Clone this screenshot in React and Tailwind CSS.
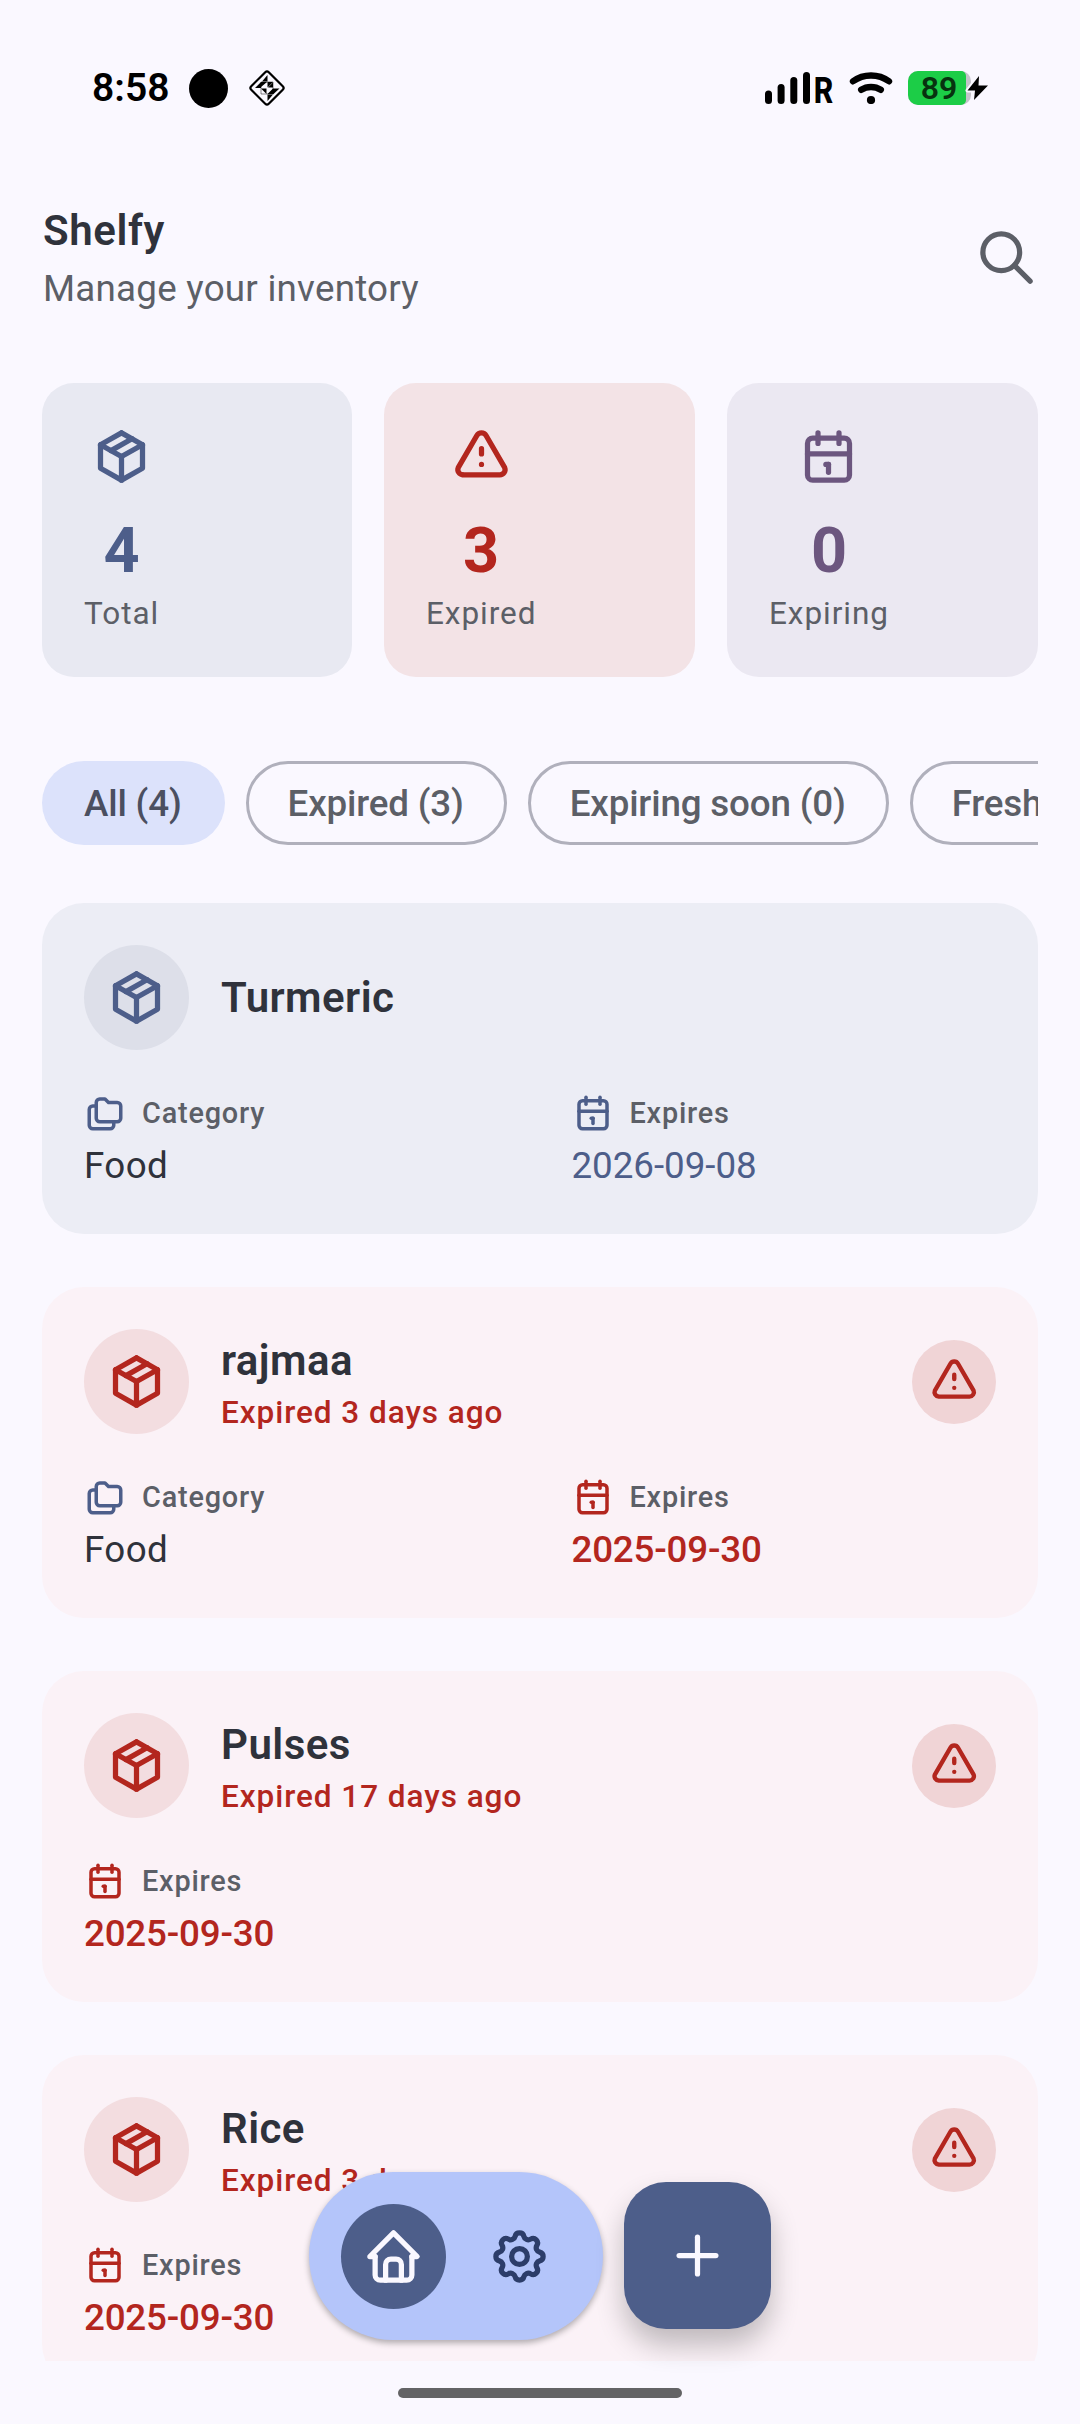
const PATHS = {
  package: ["M12 3l8 4.5v9l-8 4.5l-8 -4.5v-9l8 -4.5", "M12 12l8 -4.5", "M12 12v9", "M12 12l-8 -4.5", "M16 5.25l-8 4.5"],
  alert: ["M12 9v2m0 4v.01", "M5 19h14a2 2 0 0 0 1.84 -2.75l-7.1 -12.25a2 2 0 0 0 -3.5 0l-7.1 12.25a2 2 0 0 0 1.75 2.75"],
  calendar: ["M4 7a2 2 0 0 1 2 -2h12a2 2 0 0 1 2 2v12a2 2 0 0 1 -2 2h-12a2 2 0 0 1 -2 -2z", "M16 3v4", "M8 3v4", "M4 11h16", "M11 15h1", "M12 15v3"],
  folders: ["M9 4h3l2 2h5a2 2 0 0 1 2 2v7a2 2 0 0 1 -2 2h-10a2 2 0 0 1 -2 -2v-9a2 2 0 0 1 2 -2", "M17 17v2a2 2 0 0 1 -2 2h-10a2 2 0 0 1 -2 -2v-9a2 2 0 0 1 2 -2h2"],
  home: ["M5 12h-2l9 -9l9 9h-2", "M5 12v7a2 2 0 0 0 2 2h10a2 2 0 0 0 2 -2v-7", "M9 21v-6a2 2 0 0 1 2 -2h2a2 2 0 0 1 2 2v6"],
  settings: ["M10.325 4.317c.426 -1.756 2.924 -1.756 3.35 0a1.724 1.724 0 0 0 2.573 1.066c1.543 -.94 3.31 .826 2.37 2.37a1.724 1.724 0 0 0 1.065 2.572c1.756 .426 1.756 2.924 0 3.35a1.724 1.724 0 0 0 -1.066 2.573c.94 1.543 -.826 3.31 -2.37 2.37a1.724 1.724 0 0 0 -2.572 1.065c-.426 1.756 -2.924 1.756 -3.35 0a1.724 1.724 0 0 0 -2.573 -1.066c-1.543 .94 -3.31 -.826 -2.37 -2.37a1.724 1.724 0 0 0 -1.065 -2.572c-1.756 -.426 -1.756 -2.924 0 -3.35a1.724 1.724 0 0 0 1.066 -2.573c-.94 -1.543 .826 -3.31 2.37 -2.37c1 .608 2.296 .07 2.572 -1.065z", "M9 12a3 3 0 1 0 6 0a3 3 0 0 0 -6 0"],
  plus: ["M12 5v14", "M5 12h14"],
  search: ["M3 10a7 7 0 1 0 14 0a7 7 0 1 0 -14 0", "M21 21l-6 -6"],
};

function Icon({ name, className }) {
  return (
    <svg viewBox="0 0 24 24" fill="none" stroke="currentColor" strokeWidth="2" strokeLinecap="round" strokeLinejoin="round" className={"shrink-0 " + className}>
      {PATHS[name].map((d) => <path key={d} d={d} />)}
    </svg>
  );
}

function StatusBar() {
  return (
    <div className="flex h-[199px] items-start justify-between pr-[90px] pl-[92px] pt-[65px] text-black">
      <div className="flex h-[46px] items-center">
        <span className="w-[97px] text-[39px] leading-[46px] font-semibold">8:58</span>
        <svg className="h-[39px] w-[39px]" viewBox="0 0 39 39"><circle cx="19.5" cy="19.5" r="19.5" /></svg>
        <svg className="ml-5 h-[38px] w-[38px]" viewBox="0 0 38 38">
          <rect x="6.6" y="6.6" width="24.8" height="24.8" rx="2.5" fill="none" stroke="black" strokeWidth="2.2" transform="rotate(45 19 19)" />
          <path d="M19.500 6v6.500h-5.500zM13 13v6H7zM13 13h6l-6 5zM19.500 13h5.500l-5.500 5.500zM25 13.500v5l-5 0zM13 19.500h5.500v5.500zM25 19.500h6.500l-6.500 6zM25 19.500v5.500h-5.500zM19.500 25.500h5.500l-5.500 6.500z" />
          <path d="M13 13h12v12h-12z" fill="none" stroke="black" strokeWidth="0.8" strokeOpacity="0.6" />
        </svg>
      </div>
      <div className="flex h-[46px] items-center">
        <svg className="h-[32px] w-[46px]" viewBox="0 0 46 32">
          <rect x="0" y="18.5" width="7" height="13.5" rx="3.5" />
          <rect x="12.6" y="12" width="7" height="20" rx="3.5" />
          <rect x="25.3" y="5" width="7" height="27" rx="3.5" />
          <rect x="38" y="0" width="7" height="32" rx="3.5" />
        </svg>
        <span className="mt-[6px] ml-[4px] flex w-[18px] justify-center text-[36px] leading-[38px] font-extrabold"><span className="scale-x-[0.84]">R</span></span>
        <svg className="ml-[16px] h-[32px] w-[44px]" viewBox="0 0 44 32" fill="none" stroke="black" strokeWidth="6.4" strokeLinecap="round">
          <path d="M4 9.3C14.5 1.500 29.500 1.500 40 9.300" />
          <path d="M12.200 17.800C18 14 26 14 31.800 17.800" />
          <circle cx="22" cy="28" r="4.100" fill="black" stroke="none" />
        </svg>
        <div className="ml-[15px] h-[34px] w-[63px] rounded-[10px] bg-[#c5c3ca]">
          <div className="flex h-[34px] w-[58px] items-center justify-center rounded-l-[10px] rounded-r-[5px] bg-[#1ccd47] pl-[4px] text-[32px] leading-[34px] font-semibold text-[#07330f]">89</div>
        </div>
        <svg className="relative -ml-[7px] h-[30px] w-[26px]" viewBox="0 0 26 30">
          <path d="M15 3L3.500 17.500H11L10 27L24 12.500H14.500Z" fill="black" stroke="#faf8ff" strokeWidth="4" paintOrder="stroke" strokeLinejoin="round" />
        </svg>
      </div>
    </div>
  );
}

function Stat({ icon, value, label, card, tone }) {
  return (
    <div className={"flex h-[294px] items-start rounded-[32px] p-[42px] " + card}>
      <div className="flex flex-col items-center">
        <Icon name={icon} className={"size-[63px] " + tone} />
        <div className={"mt-[21px] text-[63px] leading-[84px] font-bold " + tone}>{value}</div>
        <div className="text-[31.5px] leading-[42px] tracking-[0.95px] text-[#5c5f67]">{label}</div>
      </div>
    </div>
  );
}

function Chip({ children, selected }) {
  return (
    <div className={"box-border flex h-[84px] shrink-0 items-center rounded-full pt-[2px] text-[36.75px] font-medium tracking-[-0.16px] " + (selected ? "bg-[#dce2fb] pr-[43px] pl-[42px] text-[#4b4f60]" : "border-3 border-[#b0b0bc] pr-[40px] pl-[39px] text-[#5c5f67]")}>
      {children}
    </div>
  );
}

function Field({ icon, iconTone, label, value, valueTone }) {
  return (
    <div className="flex flex-1 flex-col gap-[6px]">
      <div className="flex items-center gap-[16px]">
        <Icon name={icon} className={"size-[42px] " + iconTone} />
        <span className="text-[28.875px] leading-[42px] font-medium tracking-[0.8px] text-[#5c5f67]">{label}</span>
      </div>
      <div className={"text-[36.75px] leading-[52.5px] " + valueTone}>{value}</div>
    </div>
  );
}

function ItemCard({ name, status, category, date }) {
  const expired = Boolean(status);
  return (
    <div className={"h-[331px] shrink-0 rounded-[42px] p-[42px] " + (expired ? "bg-[#fbf2f7]" : "bg-[#ecedf5]")}>
      <div className="flex h-[105px] items-center">
        <div className={"flex size-[105px] items-center justify-center rounded-full " + (expired ? "bg-[#f3dde0] text-[#b3261e]" : "bg-[#dddfe9] text-[#4d5e8a]")}>
          <Icon name="package" className="size-[63px]" />
        </div>
        <div className="ml-[32px] flex-1">
          <div className="text-[42px] leading-[63px] font-semibold tracking-[0.45px] text-[#2f323b]">{name}</div>
          {expired && <div className="text-[31.5px] leading-[42px] font-medium tracking-[0.96px] text-[#b3261e]">{status}</div>}
        </div>
        {expired && (
          <div className="flex size-[84px] items-center justify-center rounded-full bg-[#f0d4d6] text-[#b3261e]">
            <Icon name="alert" className="size-[52.5px]" />
          </div>
        )}
      </div>
      <div className="mt-[42px] flex gap-[63px]">
        {category && <Field icon="folders" iconTone="text-[#4d5e8a]" label="Category" value={category} valueTone="tracking-[0.4px] text-[#2f323b]" />}
        <Field icon="calendar" iconTone={expired ? "text-[#b3261e]" : "text-[#4d5e8a]"} label="Expires" value={date} valueTone={expired ? "tracking-[-0.2px] font-medium text-[#b3261e]" : "tracking-[-0.04px] text-[#4d5e8a]"} />
      </div>
    </div>
  );
}

export default function App() {
  return (
    <div className="relative flex h-[2424px] w-[1080px] flex-col overflow-hidden bg-[#faf8ff] font-[Roboto,sans-serif]">
      <StatusBar />
      <header className="flex h-[116px] items-center justify-between px-[42px]">
        <div className="pl-px">
          <h1 className="text-[42px] leading-[63px] font-semibold tracking-[0.6px] text-[#2f323b]">Shelfy</h1>
          <p className="mt-px text-[36.75px] leading-[52.5px] tracking-[0.24px] text-[#5c5f67]">Manage your inventory</p>
        </div>
        <Icon name="search" className="size-[63px] text-[#5c5f67]" />
      </header>
      <section className="mx-[42px] mt-[68px] grid grid-cols-[310px_311px_311px] justify-between">
        <Stat icon="package" value="4" label="Total" card="bg-[#e8e9f2]" tone="text-[#4d5e8a]" />
        <Stat icon="alert" value="3" label="Expired" card="bg-[#f3e3e6]" tone="text-[#b3261e]" />
        <Stat icon="calendar" value="0" label="Expiring" card="bg-[#ebe8f2]" tone="text-[#6c567f]" />
      </section>
      <nav className="mx-[42px] mt-[84px] flex gap-[21px] overflow-hidden whitespace-nowrap">
        <Chip selected>All (4)</Chip>
        <Chip>Expired (3)</Chip>
        <Chip>Expiring soon (0)</Chip>
        <Chip>Fresh (1)</Chip>
      </nav>
      <main className="mx-[42px] mt-[58px] flex h-[1458px] flex-col gap-[53px] overflow-hidden">
        <ItemCard name="Turmeric" category="Food" date="2026-09-08" />
        <ItemCard name="rajmaa" status="Expired 3 days ago" category="Food" date="2025-09-30" />
        <ItemCard name="Pulses" status="Expired 17 days ago" date="2025-09-30" />
        <ItemCard name="Rice" status="Expired 3 days ago" date="2025-09-30" />
      </main>
      <div className="absolute top-[2172px] left-[309px] flex items-center gap-[21px]">
        <div className="flex h-[168px] w-[294px] items-center gap-[21px] rounded-full bg-[#b4c5fa] px-[31.5px] shadow-[0_3px_6px_rgba(0,0,0,0.3)]">
          <div className="flex size-[105px] items-center justify-center rounded-full bg-[#4d5e8a] text-[#faf8ff]">
            <Icon name="home" className="size-[63px]" />
          </div>
          <div className="flex size-[105px] items-center justify-center text-[#2c3d69]">
            <Icon name="settings" className="size-[63px]" />
          </div>
        </div>
        <div className="mb-px flex size-[147px] items-center justify-center rounded-[42px] bg-[#4d5e8a] text-[#faf8ff] shadow-[0_16px_28px_rgba(0,0,0,0.24)]">
          <Icon name="plus" className="size-[63px]" />
        </div>
      </div>
      <div className="mx-auto mt-[27px] h-[10px] w-[284px] rounded-full bg-[#636365]" />
    </div>
  );
}
